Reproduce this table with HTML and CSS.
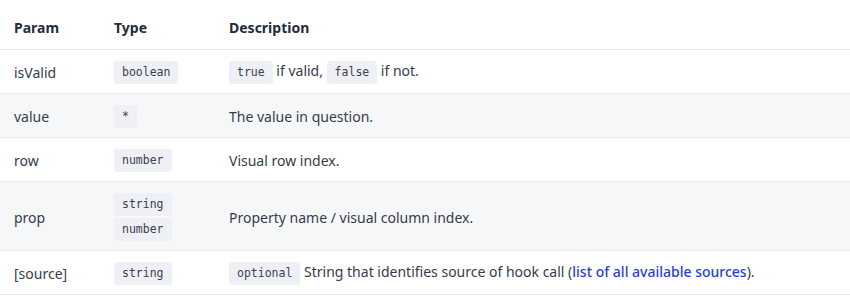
FILE: index.html
```html
<!DOCTYPE html>
<html>
<head>
<meta charset="utf-8">
<link rel="stylesheet" href="styles.css">
</head>
<body>
<table class="params">
  <thead>
    <tr><th class="c1">Param</th><th class="c2">Type</th><th class="c3">Description</th></tr>
  </thead>
  <tbody>
    <tr><td>isValid</td><td><code>boolean</code></td><td><code>true</code> if valid, <code>false</code> if not.</td></tr>
    <tr class="alt"><td>value</td><td><code>*</code></td><td>The value in question.</td></tr>
    <tr><td>row</td><td><code>number</code></td><td>Visual row index.</td></tr>
    <tr class="alt"><td>prop</td><td><div class="types"><code>string</code><code>number</code></div></td><td>Property name / visual column index.</td></tr>
    <tr><td>[source]</td><td><code>string</code></td><td><code>optional</code> String that identifies source of hook call (<a href="#" class="link">list of all available sources</a>).</td></tr>
  </tbody>
</table>
</body>
</html>
```
FILE: styles.css
```css
html, body { margin: 0; padding: 0; background: #fff; }
body {
  font-family: "Noto Sans", "Open Sans", sans-serif;
  font-size: 14px;
  color: #363c4a;
}
.params {
  width: 850px;
  border-collapse: collapse;
}
.params th {
  text-align: left;
  font-weight: 700;
  color: #252c3b;
  height: 43px;
  padding: 6px 14px 0;
  border-bottom: 1px solid #e8eaee;
}
.c1 { width: 72px; }
.c2 { width: 87px; }
.params td {
  padding: 10px 14px;
  height: 23px;
  border-bottom: 1px solid #e8eaee;
  vertical-align: middle;
}
.params tbody td { padding-top: 11px; padding-bottom: 9px; }
.params tr.alt td { background: #f6f7f9; }
code {
  display: inline-block;
  font-family: "DejaVu Sans Mono", monospace;
  font-size: 11.5px;
  line-height: 23px;
  padding: 0 8px;
  background: #eef0f6;
  color: #3b4150;
  border-radius: 3px;
  vertical-align: middle;
}
.types { display: flex; flex-direction: column; align-items: flex-start; gap: 2px; }
.link { color: #2a3fcf; text-decoration: none; font-weight: 500; }
```
